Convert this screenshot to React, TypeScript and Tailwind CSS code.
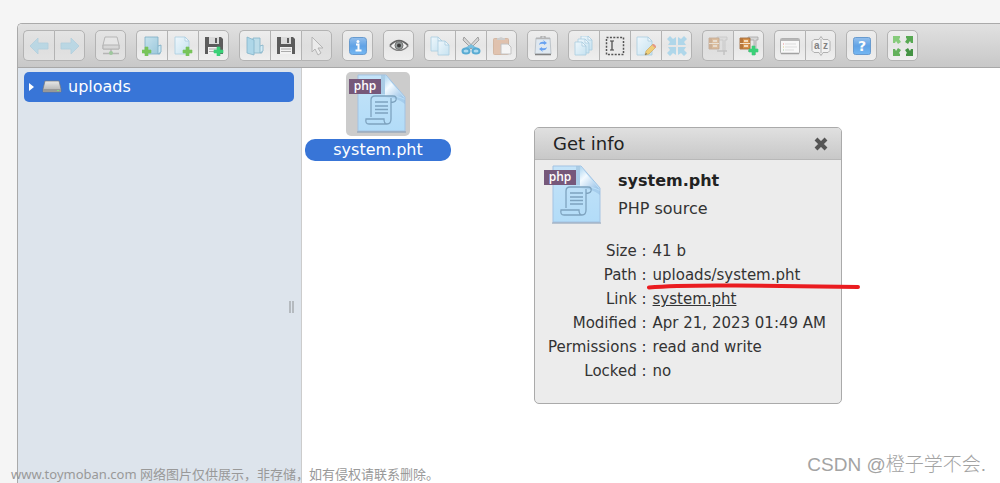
import { useState } from "react";
import type { ReactNode } from "react";

type Tool = { name: string; icon: ReactNode; disabled?: boolean };

const Plus = ({ x, y, color = "#6cc04a" }: { x: number; y: number; color?: string }) => (
  <path
    transform={`translate(${x} ${y})`}
    d="M3 0h3v3h3v3H6v3H3V6H0V3h3z"
    fill={color}
    stroke={color}
    strokeWidth=".6"
  />
);

const Page = ({ x, y, w = 11, h = 14 }: { x: number; y: number; w?: number; h?: number }) => (
  <g transform={`translate(${x} ${y})`} stroke="#a3cae0" strokeWidth=".8">
    <path d={`M0 0h${w - 4}l4 4v${h - 4}H0z`} fill="url(#sheet)" />
    <path d={`M${w - 4} 0v4h4z`} fill="#f4fbff" />
  </g>
);

const Floppy = () => (
  <>
    <path d="M1 1h16l2 2v15H1z" fill="#4d4d4d" />
    <path d="M5 1h10v7H5z" fill="#d9d9d9" />
    <path d="M11 2h2v5h-2z" fill="#4d4d4d" />
    <path d="M4 11h12v7H4z" fill="#f3f3f3" />
    <path d="M5 13h10M5 15.500h10" stroke="#a5a5a5" />
  </>
);

const Archive = () => (
  <>
    <path d="M9 1h10v3h-2v11h-2V4H9z" fill="#d5d5d5" stroke="#999" strokeWidth=".7" />
    <path d="M1 2h10v11H1z" fill="#d68a3c" stroke="#8f5420" strokeWidth=".8" />
    <path d="M1 2h3v11H1z" fill="#b06a2a" />
    <path d="M1 7.500h10" stroke="#f7e2c6" />
    <path d="M5 5h4M5 10h4" stroke="#fff3df" strokeWidth="1.500" />
    <path d="M9 15h10M16 15v4" stroke="#999" strokeWidth="1.500" />
  </>
);

const groups: Tool[][] = [
  [
    {
      name: "Back",
      disabled: true,
      icon: <path d="M1 10l8-8v5h10v6H9v5z" fill="#86cdec" stroke="#6fb6da" strokeWidth=".8" />,
    },
    {
      name: "Forward",
      disabled: true,
      icon: <path d="M19 10l-8-8v5H1v6h10v5z" fill="#86cdec" stroke="#6fb6da" strokeWidth=".8" />,
    },
  ],
  [
    {
      name: "Mount network volume",
      disabled: true,
      icon: (
        <>
          <path d="M4 1h12l2 8v4H2V9z" fill="#eee" stroke="#777" />
          <path d="M2 9h16v4H2z" fill="#ccc" stroke="#777" />
          <path d="M10 13v4M2 17.500h16" stroke="#777" strokeWidth="1.500" />
          <circle cx="10" cy="17" r="2" fill="#3da43a" />
        </>
      ),
    },
  ],
  [
    {
      name: "New folder",
      icon: (
        <>
          <path d="M3 1h13v9l2 1v7H3z" fill="url(#folder)" stroke="#71a7c2" strokeWidth=".8" />
          <path d="M16 18V10l3-1v7z" fill="#c9e8f5" stroke="#71a7c2" strokeWidth=".8" />
          <Plus x={0} y={11} />
        </>
      ),
    },
    {
      name: "New text file",
      icon: (
        <>
          <Page x={2} y={1} w={14} h={17} />
          <Plus x={10} y={11} />
        </>
      ),
    },
    {
      name: "Upload files",
      icon: (
        <>
          <Floppy />
          <Plus x={10} y={11} color="#27cf6b" />
        </>
      ),
    },
  ],
  [
    {
      name: "Open",
      icon: (
        <>
          <path d="M8 2h7v8l2 1v6H8z" fill="#b9dcea" stroke="#79adc5" strokeWidth=".8" />
          <path d="M2 1l7 3v15l-7-2z" fill="#a8d6e9" stroke="#79adc5" strokeWidth=".8" />
          <path d="M15 10l3-1v6l-3 2z" fill="#d5edf7" stroke="#79adc5" strokeWidth=".8" />
        </>
      ),
    },
    { name: "Download", icon: <Floppy /> },
    {
      name: "Get URL",
      disabled: true,
      icon: <path d="M5 1l11 11h-5l3 5-3 2-3-6-3 3z" fill="#fff" stroke="#777" />,
    },
  ],
  [
    {
      name: "Get info",
      icon: (
        <>
          <rect x="1.500" y="1.500" width="17" height="17" rx="3" fill="url(#blue)" stroke="#5b93cd" />
          <path d="M8 8.500h2.500V14M7.500 14.500h6" stroke="#fff" strokeWidth="2" fill="none" />
          <circle cx="10" cy="5.500" r="1.500" fill="#fff" />
        </>
      ),
    },
  ],
  [
    {
      name: "Preview",
      icon: (
        <>
          <path d="M1 10q9-10 18 0q-9 9-18 0z" fill="#f5f5f5" stroke="#777" strokeWidth="1.200" />
          <path d="M1 9q9-9 18 0" stroke="#555" strokeWidth="1.500" fill="none" />
          <circle cx="10" cy="9.500" r="4" fill="#8d9494" stroke="#666" />
          <circle cx="10" cy="9.500" r="2" fill="#2a2a2a" />
        </>
      ),
    },
  ],
  [
    {
      name: "Copy",
      icon: (
        <>
          <Page x={1} y={1} />
          <Page x={8} y={5} />
        </>
      ),
    },
    {
      name: "Cut",
      icon: (
        <>
          <path d="M3 1l11 12-2 1L2 4zM17 1L6 13l2 1L18 4z" fill="#d5d5d5" stroke="#888" strokeWidth=".8" />
          <path d="M5 13l5-3 5 3" stroke="#6bbbe0" strokeWidth="3" fill="none" />
          <ellipse cx="5" cy="15" rx="3.500" ry="2.500" fill="#a9daf0" stroke="#4aa5d1" strokeWidth="2" />
          <ellipse cx="15" cy="15" rx="3.500" ry="2.500" fill="#a9daf0" stroke="#4aa5d1" strokeWidth="2" />
        </>
      ),
    },
    {
      name: "Paste",
      icon: (
        <g opacity=".65">
          <rect x="1.500" y="2.500" width="15" height="16" rx="1" fill="#dda987" stroke="#c59674" />
          <path d="M5 4V2h2l2-1 2 1h2v2z" fill="#bbb" />
          <path d="M9 8h7l3 3v7H9z" fill="#fff" stroke="#aaa" />
        </g>
      ),
    },
  ],
  [
    {
      name: "Empty the folder",
      icon: (
        <>
          <path d="M3 2h14l1 16H2z" fill="#dfe9f2" stroke="#b9c1c8" />
          <path d="M3 2.500h14" stroke="#b0b0b0" strokeWidth="1.500" />
          <path d="M8 2V0h4v2" stroke="#999" fill="none" />
          <path d="M2 18.500h16" stroke="#777" strokeWidth="1.500" />
          <path
            d="M6 9q1-4 5-3l-1-2 4 3-3 2v-1q-3-1-5 1zM14 11q-1 4-5 3l1 2-4-3 3-2v1q3 1 5-1z"
            fill="#5b9bf2"
          />
        </>
      ),
    },
  ],
  [
    {
      name: "Duplicate",
      icon: (
        <>
          <Page x={7} y={0} />
          <Page x={4} y={3} />
          <Page x={1} y={6} w={11} h={13} />
        </>
      ),
    },
    {
      name: "Rename",
      icon: (
        <>
          <rect x="1.500" y="1.500" width="17" height="17" fill="none" stroke="#444" strokeWidth="1.500" strokeDasharray="2 1.400" />
          <path d="M5 5h4M5 14h4M7 5v9" stroke="#333" strokeWidth="1.200" />
        </>
      ),
    },
    {
      name: "Edit file",
      icon: (
        <>
          <Page x={1} y={1} w={15} h={18} />
          <path d="M9 19l1-4 7-7 3 3-7 7z" fill="#f0cc6b" stroke="#c59c4c" strokeWidth=".6" />
          <path d="M16 9l2-1 2 2-1 2z" fill="#e58d80" />
          <path d="M9 19l1-2 1 1z" fill="#444" />
        </>
      ),
    },
    {
      name: "Resize image",
      icon: (
        <path
          d="M0 3l3-3 3 3 3-2v8H1l2-3zM20 3l-3-3-3 3-3-2v8h8l-2-3zM0 17l3 3 3-3 3 2v-8H1l2 3zM20 17l-3 3-3-3-3 2v-8h8l-2 3z"
          fill="#a9d5ea"
        />
      ),
    },
  ],
  [
    { name: "Extract archive", disabled: true, icon: <Archive /> },
    {
      name: "Create archive",
      icon: (
        <>
          <Archive />
          <Plus x={10} y={10} color="#27cf6b" />
        </>
      ),
    },
  ],
  [
    {
      name: "List view",
      icon: (
        <>
          <rect x=".5" y="2.500" width="19" height="15" rx="1" fill="#fafafa" stroke="#aaa" />
          <path d="M1 4h18M1 17.500h18" stroke="#999" strokeWidth="1.500" />
          <path d="M5 8h11M5 11h12M5 14h9" stroke="#ddd" />
          <path d="M3 8h1" stroke="#e88" />
          <path d="M3 11h1" stroke="#dc7" />
          <path d="M3 14h1" stroke="#9c9" />
        </>
      ),
    },
    {
      name: "Sort",
      icon: (
        <>
          <path
            d="M3 3.500h5l2-3 2 3h5l2 2v9l-2 2h-5l-2 3-2-3H3l-2-2v-9z"
            fill="#f3f3f3"
            stroke="#aaa"
          />
          <path d="M10 3v14" stroke="#aaa" />
          <text x="3" y="13" fontSize="10" fontWeight="bold" fill="#777" fontFamily="Liberation Sans">a</text>
          <text x="12" y="13" fontSize="10" fontWeight="bold" fill="#777" fontFamily="Liberation Sans">z</text>
        </>
      ),
    },
  ],
  [
    {
      name: "Help",
      icon: (
        <>
          <rect x="1.500" y="1.500" width="17" height="17" rx="2" fill="url(#blue)" stroke="#5b93cd" />
          <text x="10" y="15" fontSize="14" fontWeight="bold" textAnchor="middle" fill="#fff" fontFamily="DejaVu Sans">?</text>
        </>
      ),
    },
  ],
  [
    {
      name: "Full screen",
      icon: (
        <>
          <path d="M0 0h7v2l-1 1 2 3-3 2-2-3-1 2H0z" fill="#7cc870" />
          <path d="M20 0h-7v2l1 1-2 3 3 2 2-3 1 2h2z" fill="#49a343" />
          <path d="M0 20h7v-2l-1-1 2-3-3-2-2 3-1-2H0z" fill="#55ab4c" />
          <path d="M20 20h-7v-2l1-1-2-3 3-2 2 3 1-2h2z" fill="#328a32" />
        </>
      ),
    },
  ],
];

const PhpIcon = () => (
  <svg viewBox="0 0 64 64" className="size-16 shrink-0" aria-hidden="true">
    <path d="M12 3h28l19 22v34H12z" fill="url(#php)" stroke="#a3c3e3" />
    <path d="M11 60h49" stroke="#8199b4" />
    <path d="M35 3h4v19h-4z" fill="#9fc3de" opacity=".7" />
    <path d="M39 3l20 24q-9-5-20-3z" fill="url(#fold)" />
    <path d="M39 25q11-2 20 3v4q-9-7-20-7z" fill="#8fb9df" opacity=".5" />
    <g fill="none" stroke="#7ea3bf" strokeWidth="1.300">
      <path d="M25 45V28q0-4 4-4h18q4 0 3 4-1 3-5 2v17q0 5-4 5H23q-4 0-3-5h18q0 5 3 5M45 30v-4" />
      <path d="M29 30h13M29 34h13M29 37.500h13M29 41h13" />
    </g>
    <rect x="3" y="7" width="32" height="15" fill="#76587a" />
    <text x="19" y="18" fontSize="12" fontWeight="600" textAnchor="middle" fill="#fff" fontFamily="'Open Sans', sans-serif">
      php
    </text>
  </svg>
);

const Defs = () => (
  <svg className="absolute size-0" aria-hidden="true">
    <defs>
      <linearGradient id="sheet" x2="1" y2="1">
        <stop stopColor="#f0f9fe" />
        <stop offset="1" stopColor="#c3e2f2" />
      </linearGradient>
      <linearGradient id="folder" x2="1" y2="1">
        <stop stopColor="#c4e3ef" />
        <stop offset="1" stopColor="#91c3d9" />
      </linearGradient>
      <linearGradient id="blue" x2="0" y2="1">
        <stop stopColor="#8cbcee" />
        <stop offset=".5" stopColor="#529be6" />
        <stop offset="1" stopColor="#68b3f4" />
      </linearGradient>
      <linearGradient id="php" x2="0" y2="1">
        <stop stopColor="#c4e3f8" />
        <stop offset="1" stopColor="#b2dcf8" />
      </linearGradient>
      <linearGradient id="fold" x2=".8" y2="1">
        <stop stopColor="#a9d3f0" />
        <stop offset=".4" stopColor="#f3faff" />
        <stop offset="1" stopColor="#9cc4e8" />
      </linearGradient>
      <linearGradient id="drive" x2="0" y2="1">
        <stop stopColor="#e9e9e9" />
        <stop offset="1" stopColor="#aaa" />
      </linearGradient>
    </defs>
  </svg>
);

const Toolbar = () => (
  <div className="flex flex-wrap gap-[10px] border-b border-[#a8a8a8] bg-linear-to-b from-[#e1e1e1] to-[#c8c8c8] px-[5px] py-1.5">
    {groups.map((tools) => (
      <div key={tools[0].name} className="flex">
        {tools.map((tool) => (
          <button
            key={tool.name}
            type="button"
            aria-label={tool.name}
            disabled={tool.disabled}
            className="flex h-[31px] w-[31px] items-center justify-center border-y border-l border-[#b3b3b3] bg-linear-to-b from-[#ededed] via-[#e6e6e6] to-[#efefef] first:rounded-l-[5px] last:rounded-r-[5px] last:border-r disabled:from-[#e4e4e4] disabled:via-[#dedede] disabled:to-[#e2e2e2]"
          >
            <svg viewBox="0 0 20 20" className={tool.disabled ? "size-5 opacity-40" : "size-5 opacity-90"} fill="none">
              {tool.icon}
            </svg>
          </button>
        ))}
      </div>
    ))}
  </div>
);

const InfoDialog = ({ onClose }: { onClose: () => void }) => {
  const rows: [string, ReactNode][] = [
    ["Size", "41 b"],
    ["Path", "uploads/system.pht"],
    ["Link", <a href="#system.pht" className="underline">system.pht</a>],
    ["Modified", "Apr 21, 2023 01:49 AM"],
    ["Permissions", "read and write"],
    ["Locked", "no"],
  ];

  return (
    <section
      role="dialog"
      aria-label="Get info"
      className="absolute top-[59px] left-[232px] w-[308px] rounded-[5px] border border-[#aaa] bg-[#ececec] pb-5 text-[#333]"
    >
      <header className="flex h-8 items-center justify-between rounded-t-[4px] border-b border-[#b8b8b8] bg-linear-to-b from-[#e0e0e0] to-[#c8c8c8] pr-3 pl-[18px]">
        <h2 className="text-lg text-[#222]">Get info</h2>
        <button type="button" aria-label="Close" onClick={onClose}>
          <svg viewBox="0 0 16 16" className="size-4">
            <path d="M3 3l10 10M13 3l-10 10" stroke="#555" strokeWidth="4" />
          </svg>
        </button>
      </header>
      <div className="flex gap-[13px] pt-[3px] pl-1.5">
        <PhpIcon />
        <div className="pt-1">
          <p className="text-base leading-7 font-bold text-[#222]">system.pht</p>
          <p className="text-base leading-7">PHP source</p>
        </div>
      </div>
      <table className="mt-3 ml-[13px] text-[15px] leading-6">
        <tbody>
          {rows.map(([label, value]) => (
            <tr key={label}>
              <th scope="row" className="p-0 pr-1.5 text-right font-normal whitespace-nowrap">{label} :</th>
              <td className="p-0 whitespace-nowrap">{value}</td>
            </tr>
          ))}
        </tbody>
      </table>
      <svg viewBox="0 0 216 8" className="absolute top-[155px] left-[111px] h-2 w-[216px]" fill="none" aria-hidden="true">
        <path d="M3 4.500Q30 2 90 2.500L212 4" stroke="#ea1c20" strokeWidth="4" strokeLinecap="round" />
      </svg>
    </section>
  );
};

export default function App() {
  const [infoOpen, setInfoOpen] = useState(true);

  return (
    <div className="relative flex min-h-screen flex-col overflow-hidden bg-[#f5f5f5] pt-[23px] pl-[17px] font-['DejaVu_Sans',Verdana,sans-serif]">
      <Defs />
      <main className="flex flex-1 flex-col overflow-hidden rounded-tl-[5px] border-t border-l border-[#aaa] bg-white">
        <Toolbar />
        <div className="flex flex-1">
          <nav className="flex w-[284px] shrink-0 flex-col border-r border-[#ccc] bg-[#dde4ec] pt-1 pr-[7px] pl-1.5">
            <a href="#uploads" className="flex h-[30px] items-center rounded-[5px] bg-[#3875d7] pl-[5px] text-base text-white">
              <svg viewBox="0 0 5 8" className="h-2 w-[5px]" fill="#fff" aria-hidden="true">
                <path d="M0 0l5 4-5 4z" />
              </svg>
              <svg viewBox="0 0 20 14" className="mr-1.5 ml-2 h-[14px] w-5" aria-hidden="true">
                <path d="M3 1h14l2 8v3H1V9z" fill="url(#drive)" stroke="#777" strokeWidth=".7" />
                <path d="M1 9h18v3H1z" fill="#989898" />
                <path d="M15 10.500h2" stroke="#85d67f" />
              </svg>
              uploads
            </a>
            <div className="flex flex-1 items-center justify-end">
              <div className="mt-7 h-3 w-[5px] border-x-2 border-[#b5babf]" />
            </div>
          </nav>
          <div className="relative flex-1 pt-1 pl-[3px]">
            <figure className="flex w-[146px] flex-col items-center gap-[3px]">
              <div className="rounded-[5px] bg-[#ccc]">
                <PhpIcon />
              </div>
              <figcaption className="w-full rounded-[10px] bg-[#3875d7] text-center text-base leading-[22px] text-white">
                system.pht
              </figcaption>
            </figure>
            {infoOpen && <InfoDialog onClose={() => setInfoOpen(false)} />}
          </div>
        </div>
      </main>
      <p className="absolute bottom-0 left-[11px] font-['Noto_Sans','Noto_Sans_CJK_SC',sans-serif] text-[13px] leading-[18px] whitespace-nowrap text-[#999]">
        www.toymoban.com 网络图片仅供展示，非存储，如有侵权请联系删除。
      </p>
      <p className="absolute right-[14px] bottom-1 font-['Liberation_Sans','Noto_Sans_CJK_SC',sans-serif] text-[19px] leading-7 font-light whitespace-nowrap text-[#a3a3a3]">
        CSDN @橙子学不会.
      </p>
    </div>
  );
}
